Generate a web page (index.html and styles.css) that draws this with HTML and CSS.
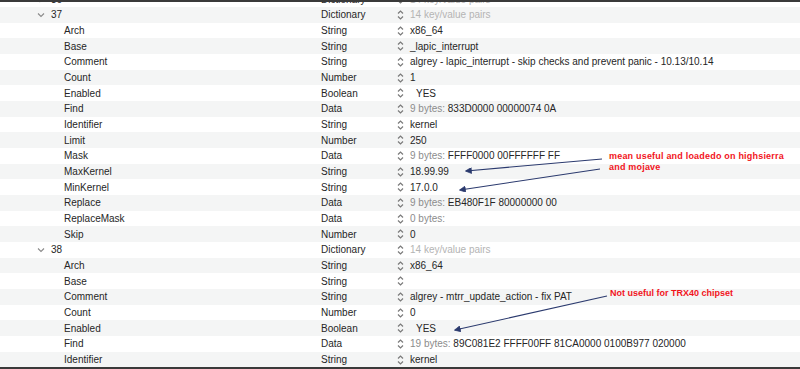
FILE: index.html
```html
<!DOCTYPE html>
<html>
<head>
<meta charset="utf-8">
<link rel="stylesheet" href="styles.css">
</head>
<body>
<div class="frame">
  <div class="list">
    <div class="row odd group"><div class="key"><svg class="disc" viewBox="0 0 8 8"><polyline points="2.5,1 5.5,4 2.5,7"/></svg>36</div><div class="type">Dictionary</div><div class="val"><svg class="step" viewBox="0 0 7 10"><polyline points="1,3.5 3.5,1 6,3.5"/><polyline points="1,6.5 3.5,9 6,6.5"/></svg><span class="ph">14 key/value pairs</span></div></div>
    <div class="row group"><div class="key"><svg class="disc" viewBox="0 0 8 8"><polyline points="1,2.5 4,5.5 7,2.5"/></svg>37</div><div class="type">Dictionary</div><div class="val"><svg class="step" viewBox="0 0 7 10"><polyline points="1,3.5 3.5,1 6,3.5"/><polyline points="1,6.5 3.5,9 6,6.5"/></svg><span class="ph">14 key/value pairs</span></div></div>
    <div class="row odd"><div class="key">Arch</div><div class="type">String</div><div class="val"><svg class="step" viewBox="0 0 7 10"><polyline points="1,3.5 3.5,1 6,3.5"/><polyline points="1,6.5 3.5,9 6,6.5"/></svg>x86_64</div></div>
    <div class="row"><div class="key">Base</div><div class="type">String</div><div class="val"><svg class="step" viewBox="0 0 7 10"><polyline points="1,3.5 3.5,1 6,3.5"/><polyline points="1,6.5 3.5,9 6,6.5"/></svg>_lapic_interrupt</div></div>
    <div class="row odd"><div class="key">Comment</div><div class="type">String</div><div class="val"><svg class="step" viewBox="0 0 7 10"><polyline points="1,3.5 3.5,1 6,3.5"/><polyline points="1,6.5 3.5,9 6,6.5"/></svg>algrey - lapic_interrupt - skip checks and prevent panic - 10.13/10.14</div></div>
    <div class="row"><div class="key">Count</div><div class="type">Number</div><div class="val"><svg class="step" viewBox="0 0 7 10"><polyline points="1,3.5 3.5,1 6,3.5"/><polyline points="1,6.5 3.5,9 6,6.5"/></svg>1</div></div>
    <div class="row odd"><div class="key">Enabled</div><div class="type">Boolean</div><div class="val"><svg class="step" viewBox="0 0 7 10"><polyline points="1,3.5 3.5,1 6,3.5"/><polyline points="1,6.5 3.5,9 6,6.5"/></svg><span class="bool">YES</span></div></div>
    <div class="row"><div class="key">Find</div><div class="type">Data</div><div class="val"><svg class="step" viewBox="0 0 7 10"><polyline points="1,3.5 3.5,1 6,3.5"/><polyline points="1,6.5 3.5,9 6,6.5"/></svg><span class="len">9 bytes:</span>&nbsp;833D0000 00000074 0A</div></div>
    <div class="row odd"><div class="key">Identifier</div><div class="type">String</div><div class="val"><svg class="step" viewBox="0 0 7 10"><polyline points="1,3.5 3.5,1 6,3.5"/><polyline points="1,6.5 3.5,9 6,6.5"/></svg>kernel</div></div>
    <div class="row"><div class="key">Limit</div><div class="type">Number</div><div class="val"><svg class="step" viewBox="0 0 7 10"><polyline points="1,3.5 3.5,1 6,3.5"/><polyline points="1,6.5 3.5,9 6,6.5"/></svg>250</div></div>
    <div class="row odd"><div class="key">Mask</div><div class="type">Data</div><div class="val"><svg class="step" viewBox="0 0 7 10"><polyline points="1,3.5 3.5,1 6,3.5"/><polyline points="1,6.5 3.5,9 6,6.5"/></svg><span class="len">9 bytes:</span>&nbsp;FFFF0000 00FFFFFF FF</div></div>
    <div class="row"><div class="key">MaxKernel</div><div class="type">String</div><div class="val"><svg class="step" viewBox="0 0 7 10"><polyline points="1,3.5 3.5,1 6,3.5"/><polyline points="1,6.5 3.5,9 6,6.5"/></svg>18.99.99</div></div>
    <div class="row odd"><div class="key">MinKernel</div><div class="type">String</div><div class="val"><svg class="step" viewBox="0 0 7 10"><polyline points="1,3.5 3.5,1 6,3.5"/><polyline points="1,6.5 3.5,9 6,6.5"/></svg>17.0.0</div></div>
    <div class="row"><div class="key">Replace</div><div class="type">Data</div><div class="val"><svg class="step" viewBox="0 0 7 10"><polyline points="1,3.5 3.5,1 6,3.5"/><polyline points="1,6.5 3.5,9 6,6.5"/></svg><span class="len">9 bytes:</span>&nbsp;EB480F1F 80000000 00</div></div>
    <div class="row odd"><div class="key">ReplaceMask</div><div class="type">Data</div><div class="val"><svg class="step" viewBox="0 0 7 10"><polyline points="1,3.5 3.5,1 6,3.5"/><polyline points="1,6.5 3.5,9 6,6.5"/></svg><span class="len">0 bytes:</span></div></div>
    <div class="row"><div class="key">Skip</div><div class="type">Number</div><div class="val"><svg class="step" viewBox="0 0 7 10"><polyline points="1,3.5 3.5,1 6,3.5"/><polyline points="1,6.5 3.5,9 6,6.5"/></svg>0</div></div>
    <div class="row odd group"><div class="key"><svg class="disc" viewBox="0 0 8 8"><polyline points="1,2.5 4,5.5 7,2.5"/></svg>38</div><div class="type">Dictionary</div><div class="val"><svg class="step" viewBox="0 0 7 10"><polyline points="1,3.5 3.5,1 6,3.5"/><polyline points="1,6.5 3.5,9 6,6.5"/></svg><span class="ph">14 key/value pairs</span></div></div>
    <div class="row"><div class="key">Arch</div><div class="type">String</div><div class="val"><svg class="step" viewBox="0 0 7 10"><polyline points="1,3.5 3.5,1 6,3.5"/><polyline points="1,6.5 3.5,9 6,6.5"/></svg>x86_64</div></div>
    <div class="row odd"><div class="key">Base</div><div class="type">String</div><div class="val"><svg class="step" viewBox="0 0 7 10"><polyline points="1,3.5 3.5,1 6,3.5"/><polyline points="1,6.5 3.5,9 6,6.5"/></svg></div></div>
    <div class="row"><div class="key">Comment</div><div class="type">String</div><div class="val"><svg class="step" viewBox="0 0 7 10"><polyline points="1,3.5 3.5,1 6,3.5"/><polyline points="1,6.5 3.5,9 6,6.5"/></svg>algrey - mtrr_update_action - fix PAT</div></div>
    <div class="row odd"><div class="key">Count</div><div class="type">Number</div><div class="val"><svg class="step" viewBox="0 0 7 10"><polyline points="1,3.5 3.5,1 6,3.5"/><polyline points="1,6.5 3.5,9 6,6.5"/></svg>0</div></div>
    <div class="row"><div class="key">Enabled</div><div class="type">Boolean</div><div class="val"><svg class="step" viewBox="0 0 7 10"><polyline points="1,3.5 3.5,1 6,3.5"/><polyline points="1,6.5 3.5,9 6,6.5"/></svg><span class="bool">YES</span></div></div>
    <div class="row odd"><div class="key">Find</div><div class="type">Data</div><div class="val"><svg class="step" viewBox="0 0 7 10"><polyline points="1,3.5 3.5,1 6,3.5"/><polyline points="1,6.5 3.5,9 6,6.5"/></svg><span class="len">19 bytes:</span>&nbsp;89C081E2 FFFF00FF 81CA0000 0100B977 020000</div></div>
    <div class="row"><div class="key">Identifier</div><div class="type">String</div><div class="val"><svg class="step" viewBox="0 0 7 10"><polyline points="1,3.5 3.5,1 6,3.5"/><polyline points="1,6.5 3.5,9 6,6.5"/></svg>kernel</div></div>
  </div>

  <svg class="arrows" viewBox="0 0 800 369" width="800" height="369">
    <defs>
      <marker id="ah" viewBox="0 0 10 10" refX="9" refY="5" markerWidth="7" markerHeight="6" orient="auto" markerUnits="userSpaceOnUse">
        <path d="M0,0 L10,5 L0,10 Z" fill="#2b3a6e"/>
      </marker>
    </defs>
    <line x1="602" y1="159" x2="466" y2="171" marker-end="url(#ah)"/>
    <line x1="600" y1="169" x2="460" y2="190" marker-end="url(#ah)"/>
    <line x1="607" y1="296" x2="455" y2="330" marker-end="url(#ah)"/>
  </svg>
  <div class="note note-a">mean useful and loadedo on highsierra<br>and mojave</div>
  <div class="note note-b">Not useful for TRX40 chipset</div>
</div>
</body>
</html>
```

FILE: styles.css
```css
html, body {
  margin: 0;
  padding: 0;
  background: #fff;
}
.frame {
  position: relative;
  width: 800px;
  height: 369px;
  box-sizing: border-box;
  border-top: 2px solid #3a3a3a;
  border-bottom: 2px solid #3a3a3a;
  overflow: hidden;
  font-family: "Liberation Sans", Arial, sans-serif;
  font-size: 10px;
  color: #262626;
}
.list {
  display: flex;
  flex-direction: column;
  margin-top: -10.68px;
}
.row {
  display: grid;
  grid-template-columns: 321px 76px 1fr;
  align-items: center;
  height: 15.68px;
  flex: none;
  background: #f4f5f5;
  white-space: nowrap;
}
.row.odd {
  background: #ffffff;
}
.key {
  padding-left: 64px;
  display: flex;
  align-items: center;
}
.group .key {
  padding-left: 37px;
}
.disc {
  width: 8px;
  height: 8px;
  margin-right: 6px;
  fill: none;
  stroke: #8a8a8a;
  stroke-width: 1.1;
}
.val {
  display: flex;
  align-items: center;
}
.step {
  width: 7px;
  height: 10px;
  margin-right: 6px;
  fill: none;
  stroke: #7a7a7a;
  stroke-width: 1.2;
  flex: none;
}
.ph {
  color: #b4b4b4;
}
.len {
  color: #8c8c8c;
}
.bool {
  padding-left: 6px;
}
.arrows {
  position: absolute;
  left: 0;
  top: -2px;
  stroke: #2b3a6e;
  stroke-width: 1.1;
}
.note {
  position: absolute;
  font-family: "Liberation Sans", Arial, sans-serif;
  font-weight: bold;
  font-size: 9px;
  line-height: 11px;
  color: #f2141c;
  white-space: nowrap;
}
.note-a {
  left: 609px;
  top: 148.5px;
  letter-spacing: 0.2px;
}
.note-b {
  left: 610px;
  top: 285.5px;
}
```
